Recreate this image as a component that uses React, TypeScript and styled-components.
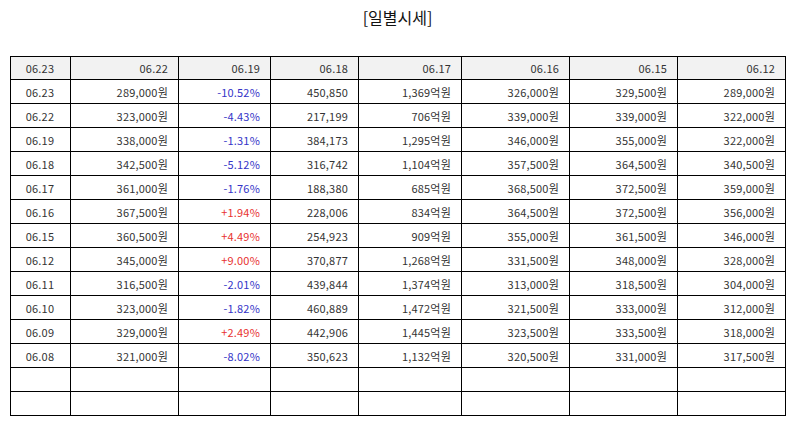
import styled, { createGlobalStyle } from "styled-components";

const GlobalStyle = createGlobalStyle`
  body {
    margin: 0;
    background: #fff;
    font-family: "Noto Sans CJK KR", "Noto Sans", sans-serif;
    color: #222;
  }
`;

interface Row {
  date: string;
  close: string;
  change: string;
  volume: string;
  amount: string;
  open: string;
  high: string;
  low: string;
}

const headers = ["06.23", "06.22", "06.19", "06.18", "06.17", "06.16", "06.15", "06.12"];

const rows: Row[] = [
  { date: "06.23", close: "289,000원", change: "-10.52%", volume: "450,850", amount: "1,369억원", open: "326,000원", high: "329,500원", low: "289,000원" },
  { date: "06.22", close: "323,000원", change: "-4.43%", volume: "217,199", amount: "706억원", open: "339,000원", high: "339,000원", low: "322,000원" },
  { date: "06.19", close: "338,000원", change: "-1.31%", volume: "384,173", amount: "1,295억원", open: "346,000원", high: "355,000원", low: "322,000원" },
  { date: "06.18", close: "342,500원", change: "-5.12%", volume: "316,742", amount: "1,104억원", open: "357,500원", high: "364,500원", low: "340,500원" },
  { date: "06.17", close: "361,000원", change: "-1.76%", volume: "188,380", amount: "685억원", open: "368,500원", high: "372,500원", low: "359,000원" },
  { date: "06.16", close: "367,500원", change: "+1.94%", volume: "228,006", amount: "834억원", open: "364,500원", high: "372,500원", low: "356,000원" },
  { date: "06.15", close: "360,500원", change: "+4.49%", volume: "254,923", amount: "909억원", open: "355,000원", high: "361,500원", low: "346,000원" },
  { date: "06.12", close: "345,000원", change: "+9.00%", volume: "370,877", amount: "1,268억원", open: "331,500원", high: "348,000원", low: "328,000원" },
  { date: "06.11", close: "316,500원", change: "-2.01%", volume: "439,844", amount: "1,374억원", open: "313,000원", high: "318,500원", low: "304,000원" },
  { date: "06.10", close: "323,000원", change: "-1.82%", volume: "460,889", amount: "1,472억원", open: "321,500원", high: "333,000원", low: "312,000원" },
  { date: "06.09", close: "329,000원", change: "+2.49%", volume: "442,906", amount: "1,445억원", open: "323,500원", high: "333,500원", low: "318,000원" },
  { date: "06.08", close: "321,000원", change: "-8.02%", volume: "350,623", amount: "1,132억원", open: "320,500원", high: "331,000원", low: "317,500원" },
];

const colWidths = [60, 108, 92, 88, 103, 108, 108, 108];

export default function App() {
  return (
    <>
      <GlobalStyle />
      <Page>
        <Title>[일별시세]</Title>
        <Table>
          <colgroup>
            {colWidths.map((w, i) => (
              <col key={i} width={w} />
            ))}
          </colgroup>
          <thead>
            <tr>
              {headers.map((h, i) => (
                <HeadCell key={h} $center={i === 0}>
                  {h}
                </HeadCell>
              ))}
            </tr>
          </thead>
          <tbody>
            {rows.map((r) => (
              <tr key={r.date}>
                <Cell $center>{r.date}</Cell>
                <Cell>{r.close}</Cell>
                <Cell $tone={r.change.startsWith("+") ? "up" : "down"}>{r.change}</Cell>
                <Cell>{r.volume}</Cell>
                <Cell>{r.amount}</Cell>
                <Cell>{r.open}</Cell>
                <Cell>{r.high}</Cell>
                <Cell>{r.low}</Cell>
              </tr>
            ))}
            {[0, 1].map((k) => (
              <tr key={`empty-${k}`}>
                {colWidths.map((_, i) => (
                  <Cell key={i} />
                ))}
              </tr>
            ))}
          </tbody>
        </Table>
      </Page>
    </>
  );
}

const Page = styled.div`
  width: 794px;
  padding: 6px 9px 0 10px;
  box-sizing: border-box;
`;

const Title = styled.h1`
  margin: 0 0 28px;
  text-align: center;
  font-size: 16px;
  font-weight: 400;
  line-height: 22px;
  color: #111;
`;

const Table = styled.table`
  width: 775px;
  border-collapse: collapse;
  table-layout: fixed;
  font-size: 11px;
  letter-spacing: 0.2px;
`;

const HeadCell = styled.th<{ $center?: boolean }>`
  height: 22px;
  padding: 0 10px 0 9px;
  border: 1px solid #000;
  background: #f2f2f2;
  font-weight: 400;
  color: #333;
  text-align: ${(p) => (p.$center ? "center" : "right")};
`;

const Cell = styled.td<{ $center?: boolean; $tone?: "up" | "down" }>`
  height: 23px;
  padding: 0 10px 0 9px;
  border: 1px solid #000;
  color: ${(p) => (p.$tone === "up" ? "#e8322f" : p.$tone === "down" ? "#3434c8" : "#333")};
  text-align: ${(p) => (p.$center ? "center" : "right")};
`;
